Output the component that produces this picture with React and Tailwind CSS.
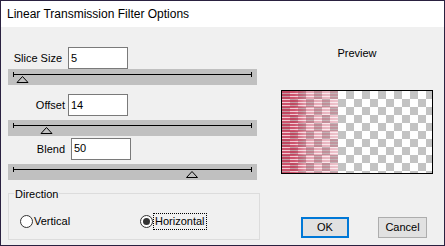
import React from "react";

const font = { fontFamily: '"Liberation Sans", Arial, sans-serif' };

function Slider({ pos }) {
  // pos = thumb centre, in px from the band's left edge
  return (
    <div className="h-[16px] w-[249px] bg-[#c0c0c0]">
      <svg width="249" height="16" viewBox="0 0 249 16" shapeRendering="crispEdges">
        <rect x="5" y="5" width="239" height="1" fill="#000" />
        <rect x="5" y="3" width="1" height="5" fill="#000" />
        <rect x="243" y="3" width="1" height="5" fill="#000" />
        <polygon
          points={`${pos},7.5 ${pos - 5.5},13.5 ${pos + 5.5},13.5`}
          fill="none"
          stroke="#000"
          strokeWidth="1"
          shapeRendering="auto"
        />
      </svg>
    </div>
  );
}

function Field({ label, value, labelW, gap, top }) {
  return (
    <div className="flex h-[22px] items-center">
      <div className={`${labelW} text-right ${gap}`}>{label}</div>
      <div
        className={`flex h-[22px] w-[60px] border border-[#7a7a7a] bg-white pl-[2px] ${
          top ? "items-start pt-[1px]" : "items-center"
        }`}
      >
        {value}
      </div>
    </div>
  );
}

function Radio({ checked }) {
  return (
    <div className="flex h-[13px] w-[13px] items-center justify-center rounded-full border border-[#333] bg-white">
      {checked && <div className="h-[7px] w-[7px] rounded-full bg-[#333]" />}
    </div>
  );
}

export default function App() {
  return (
    <div
      className="flex h-[246px] w-[445px] flex-col border border-[#2a2140] bg-[#f0f0f0] text-[11px] text-black"
      style={font}
    >
      {/* Title bar */}
      <div className="flex h-[26px] items-center bg-white pl-[6px] text-[12px]">
        Linear Transmission Filter Options
      </div>

      <div className="flex flex-1">
        {/* Left column */}
        <div className="ml-[7px] w-[252px]">
          <div className="mt-[20px]">
            <Field label="Slice Size" value="5" labelW="w-[60px]" gap="pr-[6px]" />
          </div>
          <Slider pos={14.5} />

          <div className="mt-[9px]">
            <Field label="Offset" value="14" labelW="w-[60px]" gap="pr-[3px]" />
          </div>
          <div className="mt-[4px]">
            <Slider pos={38.5} />
          </div>

          <div className="mt-[2px]">
            <Field label="Blend" value="50" labelW="w-[63px]" gap="pr-[6px]" top />
          </div>
          <div className="mt-[4px]">
            <Slider pos={184} />
          </div>

          {/* Direction group */}
          <div className="relative mt-[13px] h-[47px] w-[252px] border border-[#dcdcdc]">
            <div className="absolute -top-[8px] left-[5px] bg-[#f0f0f0] px-[1px]">Direction</div>
            <div className="mt-[19px] flex items-center pl-[11px]">
              <div className="flex w-[120px] items-center gap-[1px]">
                <Radio />
                <span>Vertical</span>
              </div>
              <div className="flex items-center gap-[0px]">
                <Radio checked />
                <span className="border border-dotted border-black px-[1px] leading-[15px]">
                  Horizontal
                </span>
              </div>
            </div>
          </div>
        </div>

        {/* Right column */}
        <div className="ml-[21px] w-[152px]">
          <div className="mt-[20px] text-center leading-[13px]">Preview</div>
          <div className="mt-[30px] flex h-[84px] w-[152px] border border-black bg-[conic-gradient(#fff_0_25%,#c3c3c3_0_50%,#fff_0_75%,#c3c3c3_0)] bg-[length:16px_16px]">
            <div className="h-full w-[56px] bg-[repeating-linear-gradient(to_bottom,rgba(192,40,72,0.8)_0_2px,rgba(192,40,72,0.25)_2px_3px)] [mask-image:linear-gradient(to_right,#000_0,#000_22%,rgba(0,0,0,0.55)_45%,rgba(0,0,0,0.35)_100%)]" />
          </div>
          <div className="mt-[43px] flex gap-[29px] pl-[20px]">
            <button className="flex h-[21px] w-[48px] items-center justify-center border-2 border-[#0078d7] bg-[#e1e1e1]">
              OK
            </button>
            <button className="flex h-[21px] w-[49px] items-center justify-center border border-[#adadad] bg-[#e1e1e1]">
              Cancel
            </button>
          </div>
        </div>
      </div>
    </div>
  );
}
